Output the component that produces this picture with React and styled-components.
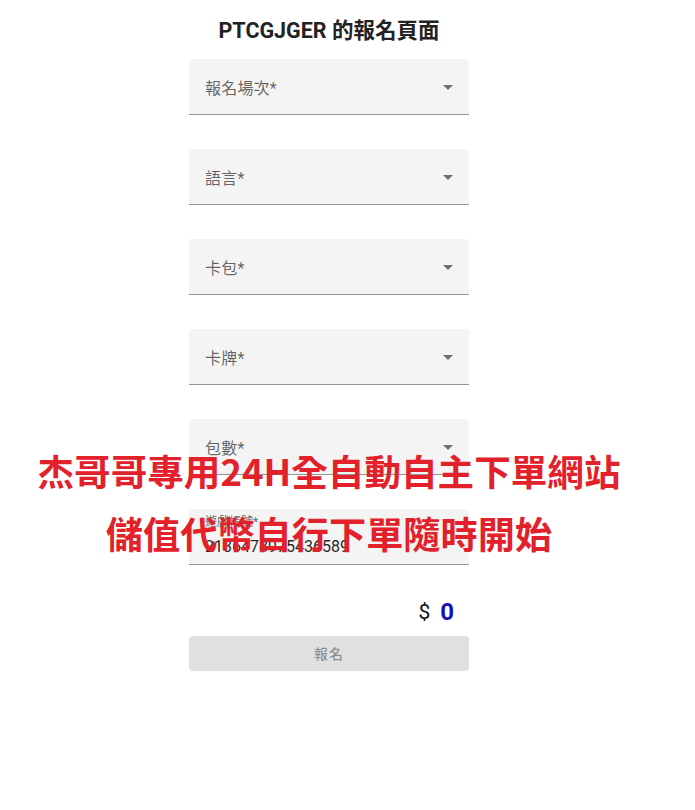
import React from "react";
import styled, { createGlobalStyle } from "styled-components";

const GlobalStyle = createGlobalStyle`
  body {
    margin: 0;
    background: #ffffff;
    font-family: Roboto, "Noto Sans CJK TC", "Noto Sans", sans-serif;
  }
`;

const Page = styled.div`
  position: relative;
  width: 658px;
  padding-top: 16px;
  display: flex;
  flex-direction: column;
  align-items: center;
`;

const Title = styled.h2`
  margin: 0 0 13px;
  font-size: 21.5px;
  line-height: 30px;
  font-weight: 700;
  color: #222222;
`;

const Form = styled.form`
  width: 280px;
  display: flex;
  flex-direction: column;
  gap: 34px;
`;

const Field = styled.div`
  position: relative;
  height: 56px;
  box-sizing: border-box;
  background: #f4f4f4;
  border-radius: 4px 4px 0 0;
  border-bottom: 1px solid #949494;
  display: flex;
  align-items: center;
  padding: 0 16px;
  cursor: pointer;
`;

const Label = styled.span`
  font-size: 16px;
  color: rgba(0, 0, 0, 0.6);
  letter-spacing: 0.2px;
`;

const Arrow = styled.svg`
  position: absolute;
  right: 9px;
  top: 16px;
  width: 24px;
  height: 24px;
  fill: rgba(0, 0, 0, 0.54);
`;

const TextField = styled(Field)`
  flex-direction: column;
  align-items: flex-start;
  justify-content: flex-start;
  padding-top: 6px;
  cursor: text;
`;

const SmallLabel = styled.span`
  font-size: 12px;
  line-height: 14px;
  color: rgba(0, 0, 0, 0.6);
`;

const Value = styled.span`
  margin-top: 8px;
  font-size: 16px;
  line-height: 20px;
  color: rgba(0, 0, 0, 0.87);
`;

const PriceRow = styled.div`
  width: 280px;
  height: 36px;
  margin-top: 29px;
  box-sizing: border-box;
  padding-right: 15px;
  display: flex;
  justify-content: flex-end;
  align-items: center;
  gap: 10px;
`;

const Currency = styled.span`
  font-size: 21px;
  color: #111111;
`;

const Amount = styled.span`
  font-size: 24px;
  font-weight: 700;
  color: #1212b8;
`;

const Submit = styled.button`
  width: 280px;
  height: 35px;
  margin-top: 6px;
  padding: 0 0 2px;
  border: none;
  border-radius: 4px;
  background: #e0e0e0;
  color: rgba(0, 0, 0, 0.38);
  font-family: inherit;
  font-size: 14px;
  font-weight: 500;
  letter-spacing: 1px;
`;

const Banner = styled.div`
  position: absolute;
  top: 440px;
  left: 0;
  right: 0;
  display: flex;
  flex-direction: column;
  align-items: center;
  pointer-events: none;
`;

const BannerLine = styled.div`
  font-family: "Noto Sans CJK TC", "Noto Sans", sans-serif;
  font-size: ${(p) => p.$size}px;
  line-height: 62px;
  font-weight: 700;
  color: #e2212b;
  white-space: nowrap;
`;

const selects = ["報名場次*", "語言*", "卡包*", "卡牌*", "包數*"];

const DropArrow = () => (
  <Arrow viewBox="0 0 24 24">
    <path d="M7 10l5 5 5-5z" />
  </Arrow>
);

const App = () => {
  return (
    <>
      <GlobalStyle />
      <Page>
        <Title>PTCGJGER 的報名頁面</Title>
        <Form onSubmit={(e) => e.preventDefault()}>
          {selects.map((label) => (
            <Field key={label}>
              <Label>{label}</Label>
              <DropArrow />
            </Field>
          ))}
          <TextField>
            <SmallLabel>遊戲帳號*</SmallLabel>
            <Value>2136478975436589</Value>
          </TextField>
        </Form>
        <PriceRow>
          <Currency>$</Currency>
          <Amount>0</Amount>
        </PriceRow>
        <Submit disabled>報名</Submit>
        <Banner>
          <BannerLine $size={36.6}>杰哥哥專用24H全自動自主下單網站</BannerLine>
          <BannerLine $size={37.2}>儲值代幣自行下單隨時開始</BannerLine>
        </Banner>
      </Page>
    </>
  );
};

export default App;
